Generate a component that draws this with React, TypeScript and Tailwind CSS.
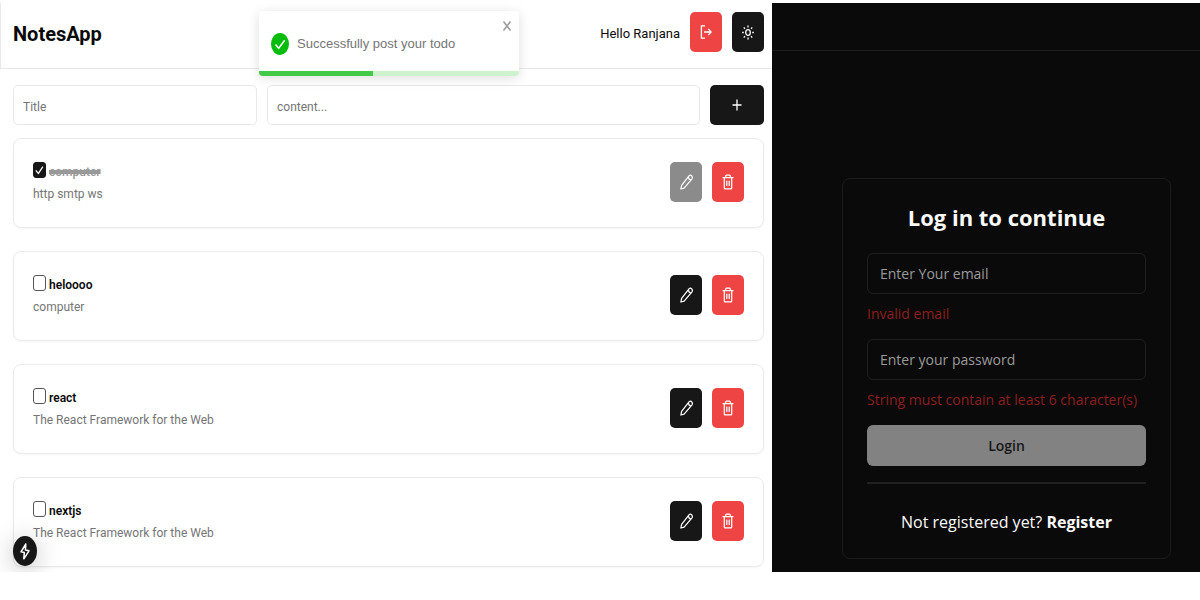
import { useState } from "react";

type Note = { id: number; title: string; content: string; done: boolean };

const initialNotes: Note[] = [
  { id: 1, title: "computer", content: "http smtp ws", done: true },
  { id: 2, title: "heloooo", content: "computer", done: false },
  { id: 3, title: "react", content: "The React Framework for the Web", done: false },
  { id: 4, title: "nextjs", content: "The React Framework for the Web", done: false },
];

function ExitIcon() {
  return (
    <svg viewBox="0 0 12 14" className="h-[14px] w-3" fill="none" stroke="currentColor" strokeWidth="1.3" aria-hidden="true">
      <path d="M5 .8H1.4v12.4H5M4 7h7.2M8.3 3.9 11.1 7l-2.8 3.1" />
    </svg>
  );
}

function SunIcon() {
  return (
    <svg viewBox="0 0 12 15" className="h-[15px] w-3" fill="none" stroke="currentColor" strokeWidth="1.3" aria-hidden="true">
      <ellipse cx="6" cy="7.5" rx="2.3" ry="2.9" />
      <path d="M6 .5v2M6 12.5v2M.2 7.5h1.6M10.2 7.5h1.6M1.8 2.4l1.1 1.4M9.1 11.2l1.1 1.4M10.2 2.4 9.1 3.8M2.9 11.2l-1.1 1.4" />
    </svg>
  );
}

function PencilIcon() {
  return (
    <svg viewBox="0 0 13 16" className="h-4 w-[13px]" fill="none" stroke="currentColor" strokeWidth="1.25" strokeLinejoin="round" aria-hidden="true">
      <path d="M.9 15 1.6 11.3 9 1.9Q10.4.3 11.7 1.8T11.8 5.1L4.1 14.1Z" />
      <path d="M8.2 3Q8.8 5.5 10.9 6" />
    </svg>
  );
}

function TrashIcon() {
  return (
    <svg viewBox="0 0 12 16" className="h-4 w-3" fill="none" stroke="currentColor" strokeWidth="1.25" strokeLinejoin="round" strokeLinecap="round" aria-hidden="true">
      <path d="M1 3.6h10M3.7 3.5V2q0-1 .8-1h3q.8 0 .8 1v1.5M2.3 3.9v10q0 1 .8 1h5.8q.8 0 .8-1v-10M4.8 7v4.4M7.2 7v4.4" />
    </svg>
  );
}

function Toast() {
  return (
    <div role="status" className="absolute top-[11px] left-[259px] flex w-[260px] flex-col overflow-hidden rounded bg-white font-['Liberation_Sans',sans-serif] shadow-[0_2px_12px_rgba(0,0,0,0.13)]">
      <div className="flex h-[60px] items-center gap-2 pt-1.5 pl-3">
        <svg viewBox="0 0 18 22" className="h-[22px] w-[18px]" aria-hidden="true">
          <ellipse cx="9" cy="11" rx="9" ry="11" fill="#07bc0c" />
          <path d="m4.5 11.5 3.2 3.8 6-8" fill="none" stroke="white" strokeWidth="1.5" />
        </svg>
        <span className="text-[13px] text-[#757575]">Successfully post your todo</span>
      </div>
      <div className="h-[5px] bg-[#cdf2ce]">
        <div className="h-full w-[44%] bg-[#45c949]" />
      </div>
      <button aria-label="Close" className="absolute top-2 right-[7px] flex h-3.5 w-2.5 items-center text-[#a0a0a0]">
        <svg viewBox="0 0 10 14" className="h-3.5 w-2.5" fill="none" stroke="currentColor" strokeWidth="1.7" aria-hidden="true">
          <path d="m1.5 2.5 7 9M8.5 2.5l-7 9" />
        </svg>
      </button>
    </div>
  );
}

function NoteCard({ note, onToggle }: { note: Note; onToggle: () => void }) {
  return (
    <li className="flex items-start justify-between rounded-lg border border-[#eaeaea] px-[19px] pt-[23px] pb-[21px] shadow-[0_1px_2px_rgba(0,0,0,0.04)]">
      <div>
        <label className="flex h-5 items-start gap-[3px]">
          <span className="relative flex h-4 w-[13px]">
            <input
              type="checkbox"
              checked={note.done}
              onChange={onToggle}
              className="h-4 w-[13px] appearance-none rounded-[3px] border border-[#555] checked:border-[#171717] checked:bg-[#171717]"
            />
            {note.done && (
              <svg viewBox="0 0 13 16" className="pointer-events-none absolute inset-0 h-4 w-[13px]" fill="none" stroke="white" strokeWidth="1.2" aria-hidden="true">
                <path d="m2.8 8.4 2.6 3 4.5-6.8" />
              </svg>
            )}
          </span>
          <span className={note.done ? "text-[12px] leading-5 font-medium text-[#999] line-through decoration-4" : "text-[12px] leading-5 font-semibold text-[#0a0a0a]"}>
            {note.title}
          </span>
        </label>
        <p className="text-[12px] leading-6 text-[#757575]">{note.content}</p>
      </div>
      <div className="flex gap-2.5">
        <button disabled={note.done} aria-label="Edit note" className="flex h-10 w-8 items-center justify-center rounded-[5px] bg-[#171717] text-white disabled:bg-[#8b8b8b]">
          <PencilIcon />
        </button>
        <button aria-label="Delete note" className="flex h-10 w-8 items-center justify-center rounded-[5px] bg-[#ef4444] text-white">
          <TrashIcon />
        </button>
      </div>
    </li>
  );
}

function NotesPanel() {
  const [notes, setNotes] = useState(initialNotes);
  const toggle = (id: number) => setNotes((all) => all.map((n) => (n.id === id ? { ...n, done: !n.done } : n)));
  return (
    <section className="relative pt-[3px] font-[Roboto,'Open_Sans',sans-serif] text-[#0a0a0a]">
      <header className="flex items-center justify-between border-b border-l border-[#e8e8e8] pt-[9px] pr-2 pb-4 pl-3">
        <h1 className="pt-[3px] text-[20px] leading-9 font-bold">NotesApp</h1>
        <div className="flex items-center gap-2.5">
          <span className="pt-[3px] text-[13px]">Hello Ranjana</span>
          <button aria-label="Log out" className="flex h-10 w-8 items-center justify-center rounded-[5px] bg-[#ef4444] text-white">
            <ExitIcon />
          </button>
          <button aria-label="Toggle theme" className="flex h-10 w-8 items-center justify-center rounded-[5px] bg-[#171717] text-white">
            <SunIcon />
          </button>
        </div>
      </header>
      <div className="pt-4 pr-2 pb-[5px] pl-[13px]">
        <form className="flex gap-2.5" onSubmit={(e) => e.preventDefault()}>
          <input aria-label="Title" placeholder="Title" className="h-10 w-[244px] rounded-[5px] border border-[#e8e8e8] px-[9px] pt-[3px] text-[12px] placeholder:text-[#757575]" />
          <input aria-label="Content" placeholder="content..." className="h-10 min-w-0 flex-1 rounded-[5px] border border-[#e8e8e8] px-[9px] pt-[3px] text-[12px] placeholder:text-[#757575]" />
          <button aria-label="Add note" className="flex h-10 w-[54px] items-center justify-center rounded-[5px] bg-[#171717] text-white">
            <svg viewBox="0 0 10 12" className="h-3 w-2.5" fill="none" stroke="currentColor" strokeWidth="1.3" aria-hidden="true">
              <path d="M5 .5v11M.5 6h9" />
            </svg>
          </button>
        </form>
        <ul className="flex flex-col gap-[23px] pt-[13px]">
          {notes.map((note) => (
            <NoteCard key={note.id} note={note} onToggle={() => toggle(note.id)} />
          ))}
        </ul>
      </div>
      <Toast />
      <div className="absolute bottom-1.5 left-[13px] flex h-[30px] w-6 items-center justify-center rounded-[50%] bg-[#171717] text-white shadow-[0_4px_24px_rgba(0,0,0,0.25)]">
        <svg viewBox="0 0 12 17" className="h-[17px] w-3" fill="none" stroke="currentColor" strokeWidth="1.5" strokeLinejoin="round" aria-hidden="true">
          <path d="M6.8 1 2 8.8l3.3.6-.5 6.4 5.2-8-3.6-.7Z" />
        </svg>
      </div>
    </section>
  );
}

function LoginPanel() {
  return (
    <section className="mt-[3px] bg-[#0a0a0a] font-['Open_Sans','Noto_Sans',sans-serif] text-[#fafafa]">
      <div className="h-12 border-b border-[#1e1e1e]" />
      <div className="pt-[127px] pr-[29px] pb-[13px] pl-[70px]">
        <form className="flex flex-col rounded-lg border border-[#1b1b1b] px-6 pt-[22px] pb-6" onSubmit={(e) => e.preventDefault()}>
          <h2 className="text-center text-[22px] leading-8 font-bold">Log in to continue</h2>
          <input type="email" aria-label="Email" placeholder="Enter Your email" className="mt-5 h-[41px] rounded-md border border-[#1f1f1f] bg-transparent px-3 text-[14px] placeholder:text-[#9a9a9a]" />
          <p className="mt-2 text-[14px] leading-6 font-medium text-[#8a1f1f]">Invalid email</p>
          <input type="password" aria-label="Password" placeholder="Enter your password" className="mt-[13px] h-[41px] rounded-md border border-[#1f1f1f] bg-transparent px-3 text-[14px] placeholder:text-[#9a9a9a]" />
          <p className="mt-2 text-[14px] leading-6 font-medium whitespace-nowrap text-[#8a1f1f]">String must contain at least 6 character(s)</p>
          <button className="mt-[13px] h-[41px] rounded-md bg-[#828282] text-[14px] font-semibold text-[#171717]">Login</button>
          <hr className="mt-4 border-t-2 border-[#202020]" />
          <p className="mt-[26px] text-center text-[16px] leading-6 whitespace-nowrap">
            Not registered yet?{" "}
            <a href="#register" className="font-bold">Register</a>
          </p>
        </form>
      </div>
    </section>
  );
}

export default function App() {
  return (
    <main className="grid grid-cols-[minmax(0,772fr)_minmax(0,428fr)] bg-white">
      <NotesPanel />
      <LoginPanel />
    </main>
  );
}
